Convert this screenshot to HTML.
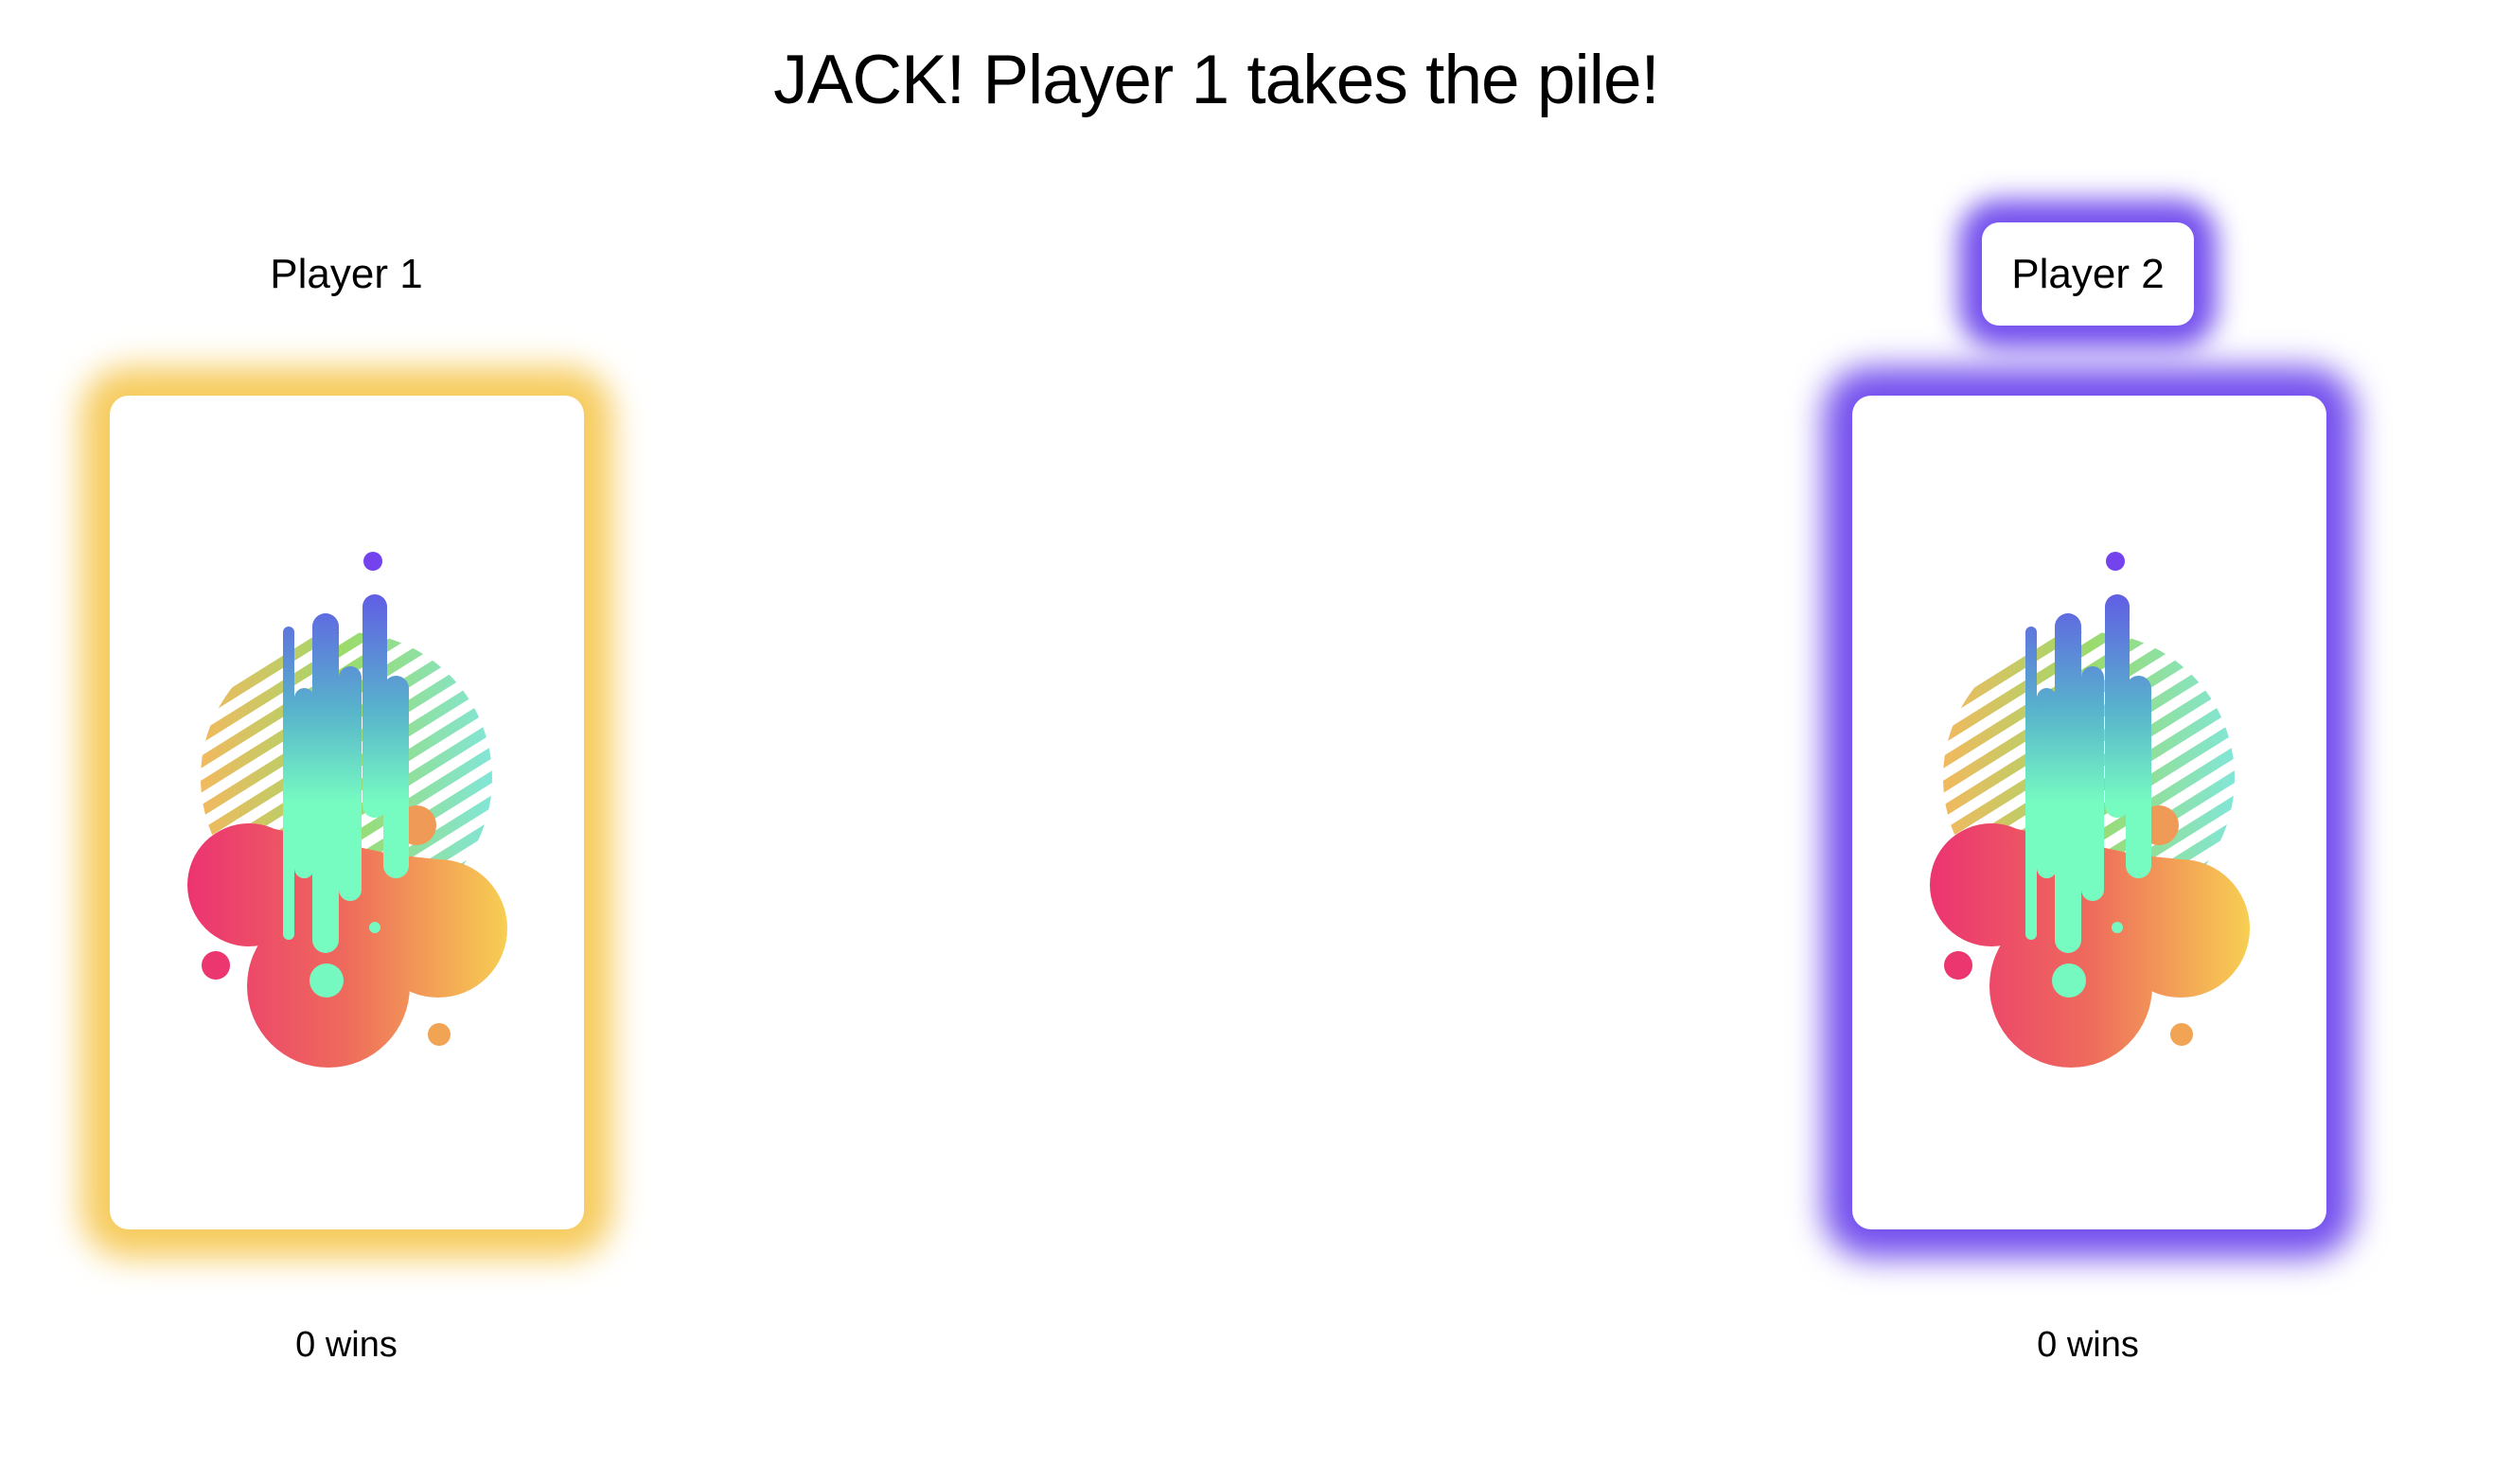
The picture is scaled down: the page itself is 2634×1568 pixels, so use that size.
<!DOCTYPE html>
<html><head><meta charset="utf-8"><style>
html,body{margin:0;padding:0;background:#fff;}
body{width:2634px;height:1568px;position:relative;overflow:hidden;font-family:"Liberation Sans",sans-serif;color:#000;}
.title{position:absolute;left:0;width:2570px;top:40px;text-align:center;font-size:73px;line-height:90px;letter-spacing:-1px;}
.card{position:absolute;top:418px;width:501px;height:881px;background:#fff;border-radius:20px;}
.c1{left:116px;box-shadow:0 0 34px 30px #f7cc5e;}
.c2{left:1957px;box-shadow:0 0 34px 30px #7450ee;}
.lbl{position:absolute;font-size:44px;line-height:50px;text-align:center;}
.l1{left:216px;width:300px;top:265px;}
.l2{left:2094px;width:224px;top:235px;height:109px;line-height:109px;background:#fff;border-radius:18px;box-shadow:0 0 28px 24px #7450ee;}
.wins{position:absolute;top:1398px;width:300px;text-align:center;font-size:38px;line-height:46px;}
.card svg{position:absolute;left:0;top:0;}
</style></head><body>
<div class="title">JACK! Player 1 takes the pile!</div>
<div class="lbl l1">Player 1</div>
<div class="lbl l2">Player 2</div>

<svg width="0" height="0" style="position:absolute">
<defs>
<linearGradient id="sg" x1="96" y1="0" x2="404" y2="0" gradientUnits="userSpaceOnUse">
<stop offset="0" stop-color="#f2b95e"/><stop offset="0.5" stop-color="#9bdb6c"/><stop offset="1" stop-color="#82e6d8"/></linearGradient>
<linearGradient id="blob" x1="82" y1="0" x2="420" y2="0" gradientUnits="userSpaceOnUse">
<stop offset="0" stop-color="#ec3471"/><stop offset="0.5" stop-color="#ee6b5c"/><stop offset="1" stop-color="#f7cf52"/></linearGradient>
<linearGradient id="bar" x1="0" y1="210" x2="0" y2="430" gradientUnits="userSpaceOnUse">
<stop offset="0" stop-color="#605ee4"/><stop offset="0.55" stop-color="#58b2cc"/><stop offset="1" stop-color="#76fbc1"/></linearGradient>
<pattern id="stripes" width="22" height="22" patternUnits="userSpaceOnUse" patternTransform="rotate(-32)">
<rect width="22" height="11" fill="#fff"/></pattern>
<mask id="sm"><rect x="0" y="0" width="501" height="881" fill="url(#stripes)"/></mask>
<g id="art">
<circle cx="250" cy="404" r="154" fill="url(#sg)" mask="url(#sm)"/>
<circle cx="324" cy="454" r="21" fill="#ef9a56"/>
<g fill="url(#blob)">
<circle cx="147" cy="517" r="65"/>
<circle cx="231" cy="624" r="86"/>
<circle cx="347" cy="563" r="73"/>
<path d="M147 452 L300 485 L347 490 L347 563 L290 600 L231 624 L175 560 Z"/>
</g>
<g fill="url(#bar)">
<rect x="183" y="244" width="12" height="331" rx="6"/>
<rect x="195" y="309" width="21" height="201" rx="10.5"/>
<rect x="214" y="230" width="28" height="359" rx="14"/>
<rect x="242" y="286" width="24" height="248" rx="12"/>
<rect x="267" y="210" width="26" height="236" rx="13"/>
<rect x="289" y="296" width="27" height="214" rx="13.5"/>
</g>
<circle cx="278" cy="175" r="10" fill="#7443ee"/>
<circle cx="112" cy="602" r="15" fill="#ec3670"/>
<circle cx="348" cy="675" r="12" fill="#f0a454"/>
<circle cx="229" cy="618" r="18" fill="#76f9c1"/>
<circle cx="280" cy="562" r="6" fill="#76f9c1"/>
</g>
</defs></svg>

<div class="card c1"><svg width="501" height="881"><use href="#art"/></svg></div>
<div class="card c2"><svg width="501" height="881"><use href="#art"/></svg></div>

<div class="wins" style="left:216px">0 wins</div>
<div class="wins" style="left:2056px">0 wins</div>
</body></html>
